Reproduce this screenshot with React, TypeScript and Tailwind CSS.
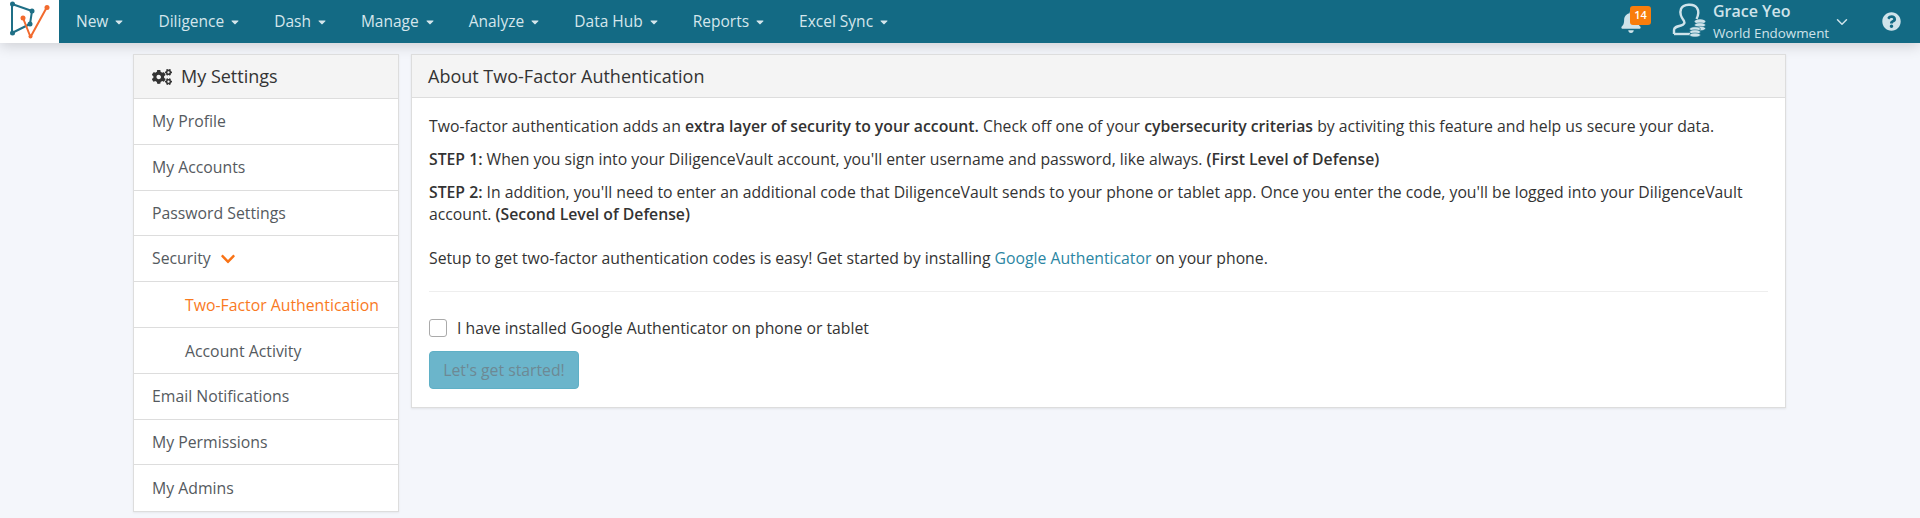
import { ChevronDown } from 'lucide-react';
import { FaCaretDown, FaCogs, FaChevronDown, FaBell, FaQuestionCircle } from 'react-icons/fa';

const navItems = ['New', 'Diligence', 'Dash', 'Manage', 'Analyze', 'Data Hub', 'Reports', 'Excel Sync'];

const Logo = () => (
  <svg width="59" height="43" viewBox="0 0 59 43" fill="none">
    <path d="M12 4 L12 33 L30 24 L32 11 Z" stroke="#1f6f86" strokeWidth="2" strokeLinejoin="round" />
    <circle cx="12.500" cy="4" r="2.500" fill="#1f6f86" />
    <circle cx="32" cy="11" r="2.500" fill="#1f6f86" />
    <circle cx="12.500" cy="33" r="2.500" fill="#1f6f86" />
    <circle cx="30" cy="24" r="2.500" fill="#1f6f86" />
    <path d="M23 18 L30.500 37 L47 7" stroke="#f26a2e" strokeWidth="2" strokeLinejoin="round" />
    <circle cx="23" cy="18" r="2.500" fill="#f26a2e" />
    <circle cx="47" cy="7.500" r="2.500" fill="#f26a2e" />
    <circle cx="30.500" cy="36.500" r="2" fill="#f26a2e" />
  </svg>
);

const UserCoins = () => (
  <svg className="-mt-[1px]" width="36" height="36" viewBox="0 0 36 36" fill="none">
    <path
      d="M2 31 V27 C2 24 5 23.500 9 22.500 C12 21.700 13 20 12 18 C9 14 7.500 10 9 6 C11 1 22 0 25 5 C27 8 26.500 12 24.500 16"
      stroke="#cfe3ea"
      strokeWidth="2.400"
    />
    <path d="M2 31 H18" stroke="#cfe3ea" strokeWidth="2.400" />
    <ellipse cx="28" cy="18.500" rx="5.500" ry="2.200" fill="#cfe3ea" />
    <ellipse cx="28" cy="22" rx="5.500" ry="2.200" fill="#cfe3ea" stroke="#136a84" strokeWidth="0.500" />
    <ellipse cx="28" cy="25.500" rx="5.500" ry="2.200" fill="#cfe3ea" stroke="#136a84" strokeWidth="0.500" />
    <ellipse cx="23" cy="26" rx="5.500" ry="2.200" fill="#cfe3ea" stroke="#136a84" strokeWidth="0.600" />
    <ellipse cx="23" cy="29" rx="5.500" ry="2.200" fill="#cfe3ea" stroke="#136a84" strokeWidth="0.600" />
    <ellipse cx="23" cy="32" rx="5.500" ry="2" fill="#cfe3ea" stroke="#136a84" strokeWidth="0.600" />
  </svg>
);

const SideRow = ({ label, sub, active, children }: { label: string; sub?: boolean; active?: boolean; children?: React.ReactNode }) => (
  <div
    className={`flex h-[45.8px] items-center border-b border-[#dddddd] pr-4 text-[15.8px] last:border-b-0 ${sub ? 'pl-[51px] pt-[2px]' : 'pl-[18px] pt-[1px]'} ${active ? 'text-[#f97a1f]' : 'text-[#555a60]'}`}
  >
    {label}
    {children}
  </div>
);

export default function App() {
  return (
    <div className="min-h-[518px] bg-[#f4f6fb] font-['Open_Sans',sans-serif] text-[15.77px] text-[#333333]">
      <nav className="flex h-[43px] items-center bg-[#136a84] shadow-[0_3px_14px_rgba(0,0,0,0.16)]">
        <div className="flex h-full w-[59px] shrink-0 items-center justify-center bg-white">
          <Logo />
        </div>
        <ul className="ml-[17px] flex gap-[33px] text-[15.5px] text-[#d5e6ec]">
          {navItems.map((item) => (
            <li key={item} className="flex items-center gap-[5px]">
              {item}
              <FaCaretDown className="h-[12px] w-[12px]" />
            </li>
          ))}
        </ul>
        <div className="ml-auto flex items-center text-[#cfe3ea]">
          <div className="relative mr-[30px]">
            <FaBell className="h-[22px] w-[22px]" />
            <span className="absolute -top-[5px] left-[10px] flex h-[19px] w-[21px] items-center justify-center rounded-[3px] bg-[#f97d0b] text-[11px] font-semibold text-white">
              14
            </span>
          </div>
          <UserCoins />
          <div className="ml-[5px] flex w-[117px] flex-col">
            <span className="text-[16px] font-semibold leading-[20px]">Grace Yeo</span>
            <span className="mt-[3px] text-[13.4px] leading-[18px]">World Endowment</span>
          </div>
          <ChevronDown className="ml-[3px] h-[18px] w-[18px]" strokeWidth={2} />
          <FaQuestionCircle className="ml-[31px] mr-[19px] h-[19px] w-[19px]" />
        </div>
      </nav>

      <main className="flex items-start gap-[12px] pl-[133px] pr-[134px] pt-[11px]">
        <aside className="w-[266px] shrink-0 border border-[#dddddd] bg-white shadow-[0_1px_2px_rgba(0,0,0,0.06)]">
          <div className="flex h-[44px] items-center gap-[9px] border-b border-[#dddddd] bg-[#f4f4f4] pl-[18px] text-[18px] text-[#333333]">
            <FaCogs className="h-[20px] w-[20px]" />
            My Settings
          </div>
          <SideRow label="My Profile" />
          <SideRow label="My Accounts" />
          <SideRow label="Password Settings" />
          <SideRow label="Security">
            <FaChevronDown className="ml-[9px] h-[16px] w-[16px] text-[#f97316]" />
          </SideRow>
          <SideRow label="Two-Factor Authentication" sub active />
          <SideRow label="Account Activity" sub />
          <SideRow label="Email Notifications" />
          <SideRow label="My Permissions" />
          <SideRow label="My Admins" />
        </aside>

        <section className="flex-1 border border-[#dddddd] bg-white shadow-[0_1px_2px_rgba(0,0,0,0.08)]">
          <div className="flex h-[43px] items-center border-b border-[#dddddd] bg-[#f4f4f4] pl-[16px] text-[18px]">
            About Two-Factor Authentication
          </div>
          <div className="px-[17px] pb-[18px] pt-[17px] leading-[22px]">
            <p className="mb-[11px]">
              Two-factor authentication adds an <b className="font-semibold">extra layer of security to your account.</b> Check off one of your{' '}
              <b className="font-semibold">cybersecurity criterias</b> by activiting this feature and help us secure your data.
            </p>
            <p className="mb-[11px]">
              <b className="font-semibold">STEP 1:</b> When you sign into your DiligenceVault account, you'll enter username and password, like
              always. <b className="font-semibold">(First Level of Defense)</b>
            </p>
            <p className="mb-[11px]">
              <b className="font-semibold">STEP 2:</b> In addition, you'll need to enter an additional code that DiligenceVault sends to your phone
              or tablet app. Once you enter the code, you'll be logged into your DiligenceVault account.{' '}
              <b className="font-semibold">(Second Level of Defense)</b>
            </p>
            <p className="mt-[22px]">
              Setup to get two-factor authentication codes is easy! Get started by installing{' '}
              <a className="text-[#2b86a3]">Google Authenticator</a> on your phone.
            </p>
            <hr className="mt-[22px] border-[#eeeeee]" />
            <label className="mt-[25px] flex items-center gap-[10px]">
              <span className="h-[18px] w-[18px] rounded-[3px] border border-[#aaaaaa] bg-white" />
              I have installed Google Authenticator on phone or tablet
            </label>
            <button className="mt-[12px] h-[38px] w-[150px] rounded-[4px] border border-[#5fb0c6] bg-[#6bb5cb] text-[#6d8994]">
              Let's get started!
            </button>
          </div>
        </section>
      </main>
    </div>
  );
}
